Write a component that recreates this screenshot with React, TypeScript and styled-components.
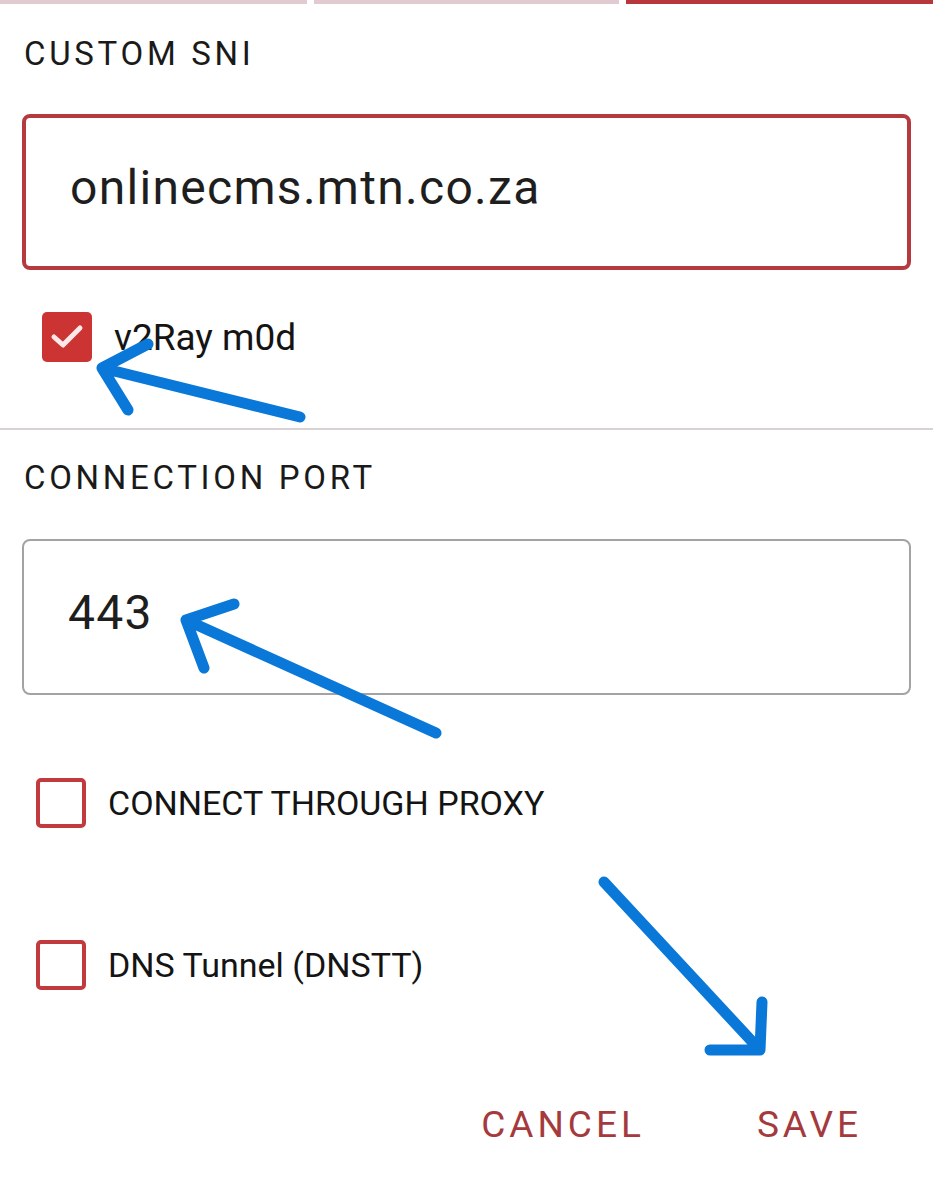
import styled, { createGlobalStyle } from "styled-components";

const GlobalStyle = createGlobalStyle`
  html, body {
    margin: 0;
    padding: 0;
    background: #ffffff;
    font-family: Roboto, "Liberation Sans", sans-serif;
    color: #1c1c1c;
  }
`;

/* Page */
const Page = styled.div`
  position: relative;
  width: 933px;
  height: 1191px;
  overflow: hidden;
  background: #ffffff;
`;

const TabStrip = styled.div`
  display: grid;
  grid-template-columns: 307px 305px 1fr;
  gap: 7px;
  height: 4px;
`;

type TabProps = { active?: boolean };

const TabBar = styled.div<TabProps>`
  background-color: ${({ active }) => (active ? "#b7373b" : "#e2cbd0")};
`;

const Section = styled.section`
  display: flex;
  flex-direction: column;
  padding: 0 22px;
`;

const Label = styled.div`
  font-size: 33px;
  line-height: 40px;
  letter-spacing: 3.7px;
  font-weight: 400;
  color: #1a1a1a;
  padding-left: 2px;
`;

type FieldProps = { focused?: boolean; size?: number };

const Field = styled.div<FieldProps>`
  display: flex;
  align-items: center;
  box-sizing: border-box;
  height: 156px;
  padding: 0 0 10px 44px;
  border: ${({ focused }) =>
    focused ? "4px solid #b5393e" : "2px solid #a3a3a3"};
  border-radius: 8px;
  font-size: ${({ size }) => size || 48}px;
  letter-spacing: 1.3px;
  color: #1e1e1e;
`;

type RowProps = { indent: number };

const CheckRow = styled.label<RowProps>`
  display: flex;
  align-items: center;
  gap: 22px;
  padding-left: ${({ indent }) => indent}px;
  color: #141414;
`;

const RowText = styled.span<{ size?: number }>`
  font-size: ${({ size }) => size || 34}px;
`;

type BoxProps = { checked?: boolean };

const Box = styled.span<BoxProps>`
  display: inline-flex;
  align-items: center;
  justify-content: center;
  box-sizing: border-box;
  width: 50px;
  height: 50px;
  border-radius: 5px;
  background-color: ${({ checked }) => (checked ? "#cc3434" : "transparent")};
  border: ${({ checked }) => (checked ? "none" : "4px solid #c03a3e")};
`;

const Divider = styled.hr`
  margin: 0;
  border: none;
  height: 2px;
  background-color: #d8d2d2;
`;

const Actions = styled.div`
  display: flex;
  justify-content: flex-end;
  gap: 112px;
  padding-right: 71px;
  padding-top: 5px;
`;

const ActionButton = styled.button`
  background: transparent;
  border: none;
  padding: 0;
  font-family: inherit;
  font-size: 37px;
  letter-spacing: 4px;
  color: #a43a3d;
  cursor: pointer;
`;

const Spacer = styled.div<{ h: number }>`
  height: ${({ h }) => h}px;
  flex-shrink: 0;
`;

/* Annotation overlay */
const Overlay = styled.svg`
  position: absolute;
  left: 0;
  top: 0;
  width: 933px;
  height: 1191px;
  pointer-events: none;
`;

const CheckMark = () => (
  <svg width="34" height="26" viewBox="0 0 34 26">
    <path
      d="M4 13 L13 21 L30 4"
      fill="none"
      stroke="#fbe9e9"
      strokeWidth="5"
      strokeLinecap="round"
      strokeLinejoin="round"
    />
  </svg>
);

const Arrows = () => (
  <Overlay viewBox="0 0 933 1191">
    <g
      fill="none"
      stroke="#0a78d8"
      strokeWidth="11"
      strokeLinecap="round"
      strokeLinejoin="round"
    >
      <path d="M300 417 L102 368 M148 344 L102 368 L128 410" />
      <path d="M436 733 L186 620 M234 604 L186 620 L204 668" />
      <path d="M604 882 L760 1050 M762 1002 L760 1050 L710 1050" />
    </g>
  </Overlay>
);

export default function App() {
  return (
    <Page>
      <GlobalStyle />
      <TabStrip>
        <TabBar />
        <TabBar />
        <TabBar active />
      </TabStrip>
      <Section>
        <Spacer h={30} />
        <Label>CUSTOM SNI</Label>
        <Spacer h={40} />
        <Field focused>onlinecms.mtn.co.za</Field>
        <Spacer h={42} />
        <CheckRow indent={20}>
          <Box checked>
            <CheckMark />
          </Box>
          <RowText size={37}>v2Ray m0d</RowText>
        </CheckRow>
      </Section>
      <Spacer h={66} />
      <Divider />
      <Section>
        <Spacer h={28} />
        <Label>CONNECTION PORT</Label>
        <Spacer h={41} />
        <Field size={48}>443</Field>
        <Spacer h={83} />
        <CheckRow indent={14}>
          <Box />
          <RowText>CONNECT THROUGH PROXY</RowText>
        </CheckRow>
        <Spacer h={112} />
        <CheckRow indent={14}>
          <Box />
          <RowText>DNS Tunnel (DNSTT)</RowText>
        </CheckRow>
        <Spacer h={108} />
      </Section>
      <Actions>
        <ActionButton>CANCEL</ActionButton>
        <ActionButton>SAVE</ActionButton>
      </Actions>
      <Arrows />
    </Page>
  );
}
